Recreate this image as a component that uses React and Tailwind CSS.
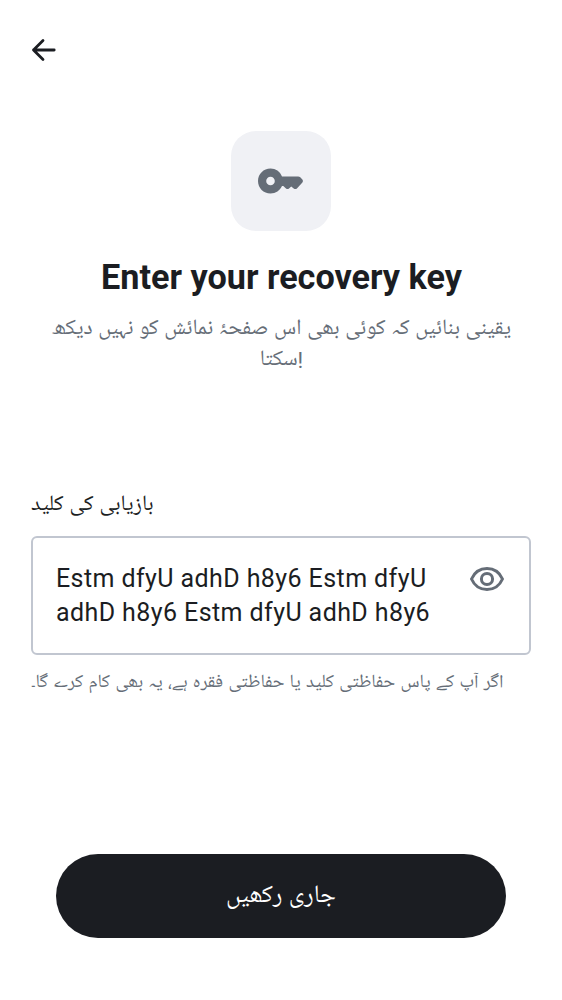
export default function App() {
  return (
    <main className="flex h-[1000px] w-[562px] flex-col bg-white font-[Roboto,'Noto_Naskh_Arabic_UI','Noto_Naskh_Arabic',sans-serif] text-[#1b1d22]">
      <header className="flex h-[100px] items-center px-[31px]">
        <button aria-label="Back">
          <svg width="25" height="24" viewBox="0 0 25 24" fill="none" stroke="currentColor" strokeWidth="2.8" strokeLinecap="round" strokeLinejoin="round"><path d="M12 2.500 2.500 12l9.500 9.500M2.500 12h20.700" /></svg>
        </button>
      </header>
      <section className="mt-[31px] flex flex-col items-center">
        <div className="flex size-[100px] items-center justify-center rounded-[25px] bg-[#f0f1f5]">
          <svg width="46" height="26" viewBox="0 0 46 26" fill="#656d77"><path fillRule="evenodd" d="M12.500 0.500C5.600 0.500 0 6 0 13s5.600 12.500 12.500 12.500c5.200 0 9.500-3 11.500-7.500h1.300l2.700 2.500q1.500 1 3 0l2.200-2 2.500 2q1.700 1.200 3.200 0l5.500-6q1.200-1.500 0-3l-2.400-2.500q-.8-.6-1.800-.6H24C22 3.500 17.700.500 12.500.500Zm0 8.200a4.300 4.300 0 1 1 0 8.600 4.300 4.300 0 0 1 0-8.600Z" /></svg>
        </div>
        <h1 className="mt-[25px] pl-px text-[34.2px] leading-[42px] font-bold whitespace-nowrap">Enter your recovery key</h1>
        <p className="mt-4 pl-px text-center text-[21.9px] leading-[31px] [word-spacing:0.250px] whitespace-nowrap text-[#656d77]">یقینی بنائیں کہ کوئی بھی اس صفحۂ نمائش کو نہیں دیکھ<br />سکتا!</p>
      </section>
      <section className="mt-[115px] px-[31px]">
        <label className="block h-[30px] text-[21.9px] leading-[30px] [word-spacing:0.400px]">بازیابی کی کلید</label>
        <div className="mt-[15px] flex h-[119px] items-start justify-between rounded-[6px] border-2 border-[#c1c6d0] pt-[24px] pr-[24px] pl-[23px]">
          <p className="text-[25px] leading-[34px] tracking-[0.410px] whitespace-nowrap">Estm dfyU adhD h8y6 Estm dfyU<br />adhD h8y6 Estm dfyU adhD h8y6</p>
          <svg className="mt-1" width="36" height="26" viewBox="0 0 36 26" fill="none" stroke="#656d77" strokeWidth="3"><path d="M2.500 13C5.500 6.200 11 2.500 18 2.500S30.500 6.200 33.500 13C30.500 19.800 25 23.500 18 23.500S5.500 19.800 2.500 13Z" strokeLinejoin="round" /><circle cx="18" cy="13" r="5.600" /></svg>
        </div>
        <p className="mt-4 text-[18.75px] leading-[26px] [word-spacing:0.600px] whitespace-nowrap text-[#656d77]">اگر آپ کے پاس حفاظتی کلید یا حفاظتی فقرہ ہے، یہ بھی کام کرے گا۔</p>
      </section>
      <button className="mx-[56px] mt-auto mb-[62.500px] h-[83.500px] rounded-full bg-[#1b1d22] pt-px text-[25px] text-white">جاری رکھیں</button>
    </main>
  );
}
